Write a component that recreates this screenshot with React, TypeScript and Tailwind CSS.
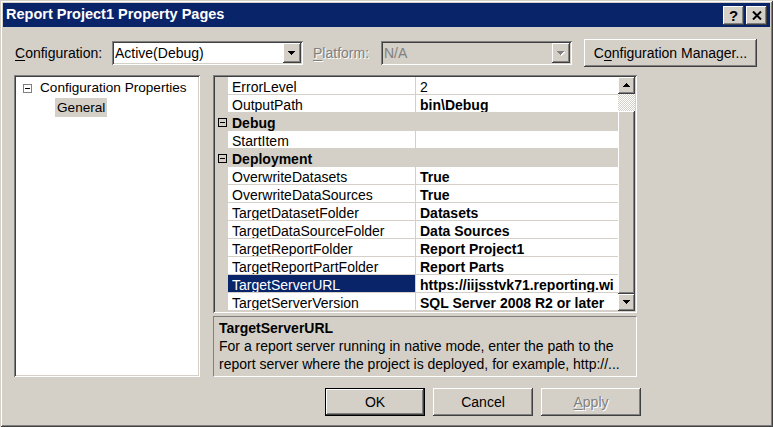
import React from "react";

// classic 3D edges
const RAISED =
  "shadow-[inset_-1px_-1px_0_#404040,inset_1px_1px_0_#ffffff,inset_-2px_-2px_0_#808080,inset_2px_2px_0_#d4d0c8]";
const SUNKEN =
  "shadow-[inset_1px_1px_0_#808080,inset_-1px_-1px_0_#ffffff,inset_2px_2px_0_#404040,inset_-2px_-2px_0_#d4d0c8]";
const DISABLED = "text-[#808080] [text-shadow:1px_1px_0_#ffffff]";

type Row =
  | { kind: "cat"; label: string }
  | { kind: "prop"; name: string; value: string; bold?: boolean; selected?: boolean };

const ROWS: Row[] = [
  { kind: "prop", name: "ErrorLevel", value: "2" },
  { kind: "prop", name: "OutputPath", value: "bin\\Debug", bold: true },
  { kind: "cat", label: "Debug" },
  { kind: "prop", name: "StartItem", value: "" },
  { kind: "cat", label: "Deployment" },
  { kind: "prop", name: "OverwriteDatasets", value: "True", bold: true },
  { kind: "prop", name: "OverwriteDataSources", value: "True", bold: true },
  { kind: "prop", name: "TargetDatasetFolder", value: "Datasets", bold: true },
  { kind: "prop", name: "TargetDataSourceFolder", value: "Data Sources", bold: true },
  { kind: "prop", name: "TargetReportFolder", value: "Report Project1", bold: true },
  { kind: "prop", name: "TargetReportPartFolder", value: "Report Parts", bold: true },
  { kind: "prop", name: "TargetServerURL", value: "https://iijsstvk71.reporting.wi", bold: true, selected: true },
  { kind: "prop", name: "TargetServerVersion", value: "SQL Server 2008 R2 or later", bold: true },
];

function Arrow({ dir, disabled }: { dir: "up" | "down"; disabled?: boolean }) {
  const widths = dir === "down" ? [7, 5, 3, 1] : [1, 3, 5, 7];
  return (
    <svg width="8" height="5" viewBox="0 0 8 5" shapeRendering="crispEdges">
      {disabled &&
        widths.map((w, i) => (
          <rect key={"s" + i} x={(7 - w) / 2 + 1} y={i + 1} width={w} height={1} fill="#ffffff" />
        ))}
      {widths.map((w, i) => (
        <rect key={i} x={(7 - w) / 2} y={i} width={w} height={1} fill={disabled ? "#808080" : "#000000"} />
      ))}
    </svg>
  );
}

function MinusBox({ stroke, fill }: { stroke: string; fill: string }) {
  return (
    <svg width="9" height="9" viewBox="0 0 9 9" shapeRendering="crispEdges" className="shrink-0">
      <rect x="0.5" y="0.5" width="8" height="8" fill={fill} stroke={stroke} />
      <rect x="2" y="4" width="5" height="1" fill="#000000" />
    </svg>
  );
}

function Combo({ value, disabled }: { value: string; disabled?: boolean }) {
  return (
    <div
      className={`flex h-[24px] w-[191px] items-center p-[2px] ${SUNKEN} ${disabled ? "bg-[#d4d0c8]" : "bg-white"}`}
    >
      <span className={`flex-1 pl-[1px] ${disabled ? "text-[#808080]" : "text-black"}`}>{value}</span>
      <div className={`flex h-[20px] w-[18px] items-center justify-center bg-[#d4d0c8] ${RAISED}`}>
        <Arrow dir="down" disabled={disabled} />
      </div>
    </div>
  );
}

function PropRow({ row }: { row: Row }) {
  if (row.kind === "cat") {
    return (
      <div className="flex h-[18px] bg-[#d4d0c8]">
        <div className="flex w-[13px] items-center justify-center pl-[2px]">
          <MinusBox stroke="#000000" fill="#d4d0c8" />
        </div>
        <div className="pl-[4px] pt-[3px] font-bold leading-[14px]">{row.label}</div>
      </div>
    );
  }
  return (
    <div className="flex h-[18px]">
      <div className="w-[13px] shrink-0 bg-[#d4d0c8]" />
      <div
        className={`w-[188px] shrink-0 overflow-hidden whitespace-nowrap border-b border-r border-[#d4d0c8] pl-[4px] pt-[3px] leading-[14px] ${
          row.selected ? "bg-[#0a246a] text-white" : "bg-white"
        }`}
      >
        {row.name}
      </div>
      <div
        className={`min-w-0 flex-1 overflow-hidden whitespace-nowrap border-b border-[#d4d0c8] bg-white pl-[4px] pt-[3px] leading-[14px] ${
          row.bold ? "font-bold" : ""
        }`}
      >
        {row.value}
      </div>
    </div>
  );
}

function ScrollBar() {
  return (
    <div className="flex w-[17px] shrink-0 flex-col">
      <div className={`flex h-[17px] items-center justify-center bg-[#d4d0c8] ${RAISED}`}>
        <Arrow dir="up" />
      </div>
      <div className="h-[17px] bg-[image:repeating-conic-gradient(#d4d0c8_0%_25%,#ffffff_0%_50%)] bg-[length:2px_2px]" />
      <div className={`flex-1 bg-[#d4d0c8] ${RAISED}`} />
      <div className={`flex h-[17px] items-center justify-center bg-[#d4d0c8] ${RAISED}`}>
        <Arrow dir="down" />
      </div>
    </div>
  );
}

function Button({ children, isDefault, disabled }: { children: React.ReactNode; isDefault?: boolean; disabled?: boolean }) {
  return (
    <div className={`h-[28px] w-[100px] bg-[#d4d0c8] ${isDefault ? "border border-black" : ""}`}>
      <div
        className={`flex h-full w-full items-center justify-center ${RAISED} ${disabled ? DISABLED : "text-black"}`}
      >
        {children}
      </div>
    </div>
  );
}

export default function App() {
  return (
    <div
      className={`flex h-[427px] w-[773px] flex-col bg-[#d4d0c8] p-[3px] font-['Liberation_Sans',Arial,sans-serif] text-[14px] text-black shadow-[inset_1px_1px_0_#d4d0c8,inset_-1px_-1px_0_#404040,inset_2px_2px_0_#ffffff,inset_-2px_-2px_0_#808080]`}
    >
      {/* Title bar */}
      <div className="flex h-[24px] shrink-0 items-center justify-between bg-[#0a246a] pl-[3px] pr-[3px]">
        <span className="text-[14.5px] font-bold text-white">Report Project1 Property Pages</span>
        <div className="flex gap-[2px]">
          <div className={`flex h-[19px] w-[21px] items-center justify-center bg-[#d4d0c8] ${RAISED}`}>
            <span className="text-[15px] font-bold leading-none">?</span>
          </div>
          <div className={`flex h-[19px] w-[21px] items-center justify-center bg-[#d4d0c8] ${RAISED}`}>
            <svg width="10" height="9" viewBox="0 0 10 9">
              <path d="M1 0.5 L9 8.5 M9 0.5 L1 8.5" stroke="#000000" strokeWidth="2" />
            </svg>
          </div>
        </div>
      </div>

      <div className="flex flex-col pl-[11px]">
        {/* Configuration row */}
        <div className="mt-[12px] flex h-[28px] items-center">
          <div className="w-[98px] pl-[1px]">
            <span className="underline underline-offset-2">C</span>onfiguration:
          </div>
          <Combo value="Active(Debug)" />
          <div className={`ml-[10px] w-[68px] ${DISABLED}`}>
            <span className="underline underline-offset-2">P</span>latform:
          </div>
          <Combo value="N/A" disabled />
          <div className={`ml-[12px] flex h-[28px] w-[173px] items-center justify-center bg-[#d4d0c8] ${RAISED}`}>
            <span>
              C<span className="underline underline-offset-2">o</span>nfiguration Manager...
            </span>
          </div>
        </div>

        {/* Body */}
        <div className="mt-[8px] flex">
          <div className={`h-[302px] w-[186px] bg-white px-[2px] pt-[4px] text-[13.6px] ${SUNKEN}`}>
            <div className="flex h-[19px] items-center pl-[7px]">
              <MinusBox stroke="#808080" fill="#ffffff" />
              <span className="ml-[8px]">Configuration Properties</span>
            </div>
            <div className="flex h-[19px] items-center pl-[39px]">
              <span className="bg-[#d4d0c8] px-[2px] leading-[19px]">General</span>
            </div>
          </div>

          <div className="ml-[13px] flex w-[424px] flex-col">
            <div className={`flex h-[238px] bg-white p-[2px] ${SUNKEN}`}>
              <div className="flex min-w-0 flex-1 flex-col">
                {ROWS.map((r, i) => (
                  <PropRow key={i} row={r} />
                ))}
              </div>
              <ScrollBar />
            </div>
            <div className="mt-[3px] h-[61px] border border-b-white border-l-[#808080] border-r-white border-t-[#808080] bg-[#d4d0c8] px-[5px] pt-[2px] leading-[18px]">
              <div className="font-bold">TargetServerURL</div>
              <div>For a report server running in native mode, enter the path to the</div>
              <div>report server where the project is deployed, for example, http://...</div>
            </div>
          </div>
        </div>

        {/* Dialog buttons */}
        <div className="mt-[11px] flex gap-[8px] pl-[311px]">
          <Button isDefault>OK</Button>
          <Button>Cancel</Button>
          <Button disabled>
            <span>
              <span className="underline underline-offset-2">A</span>pply
            </span>
          </Button>
        </div>
      </div>
    </div>
  );
}
